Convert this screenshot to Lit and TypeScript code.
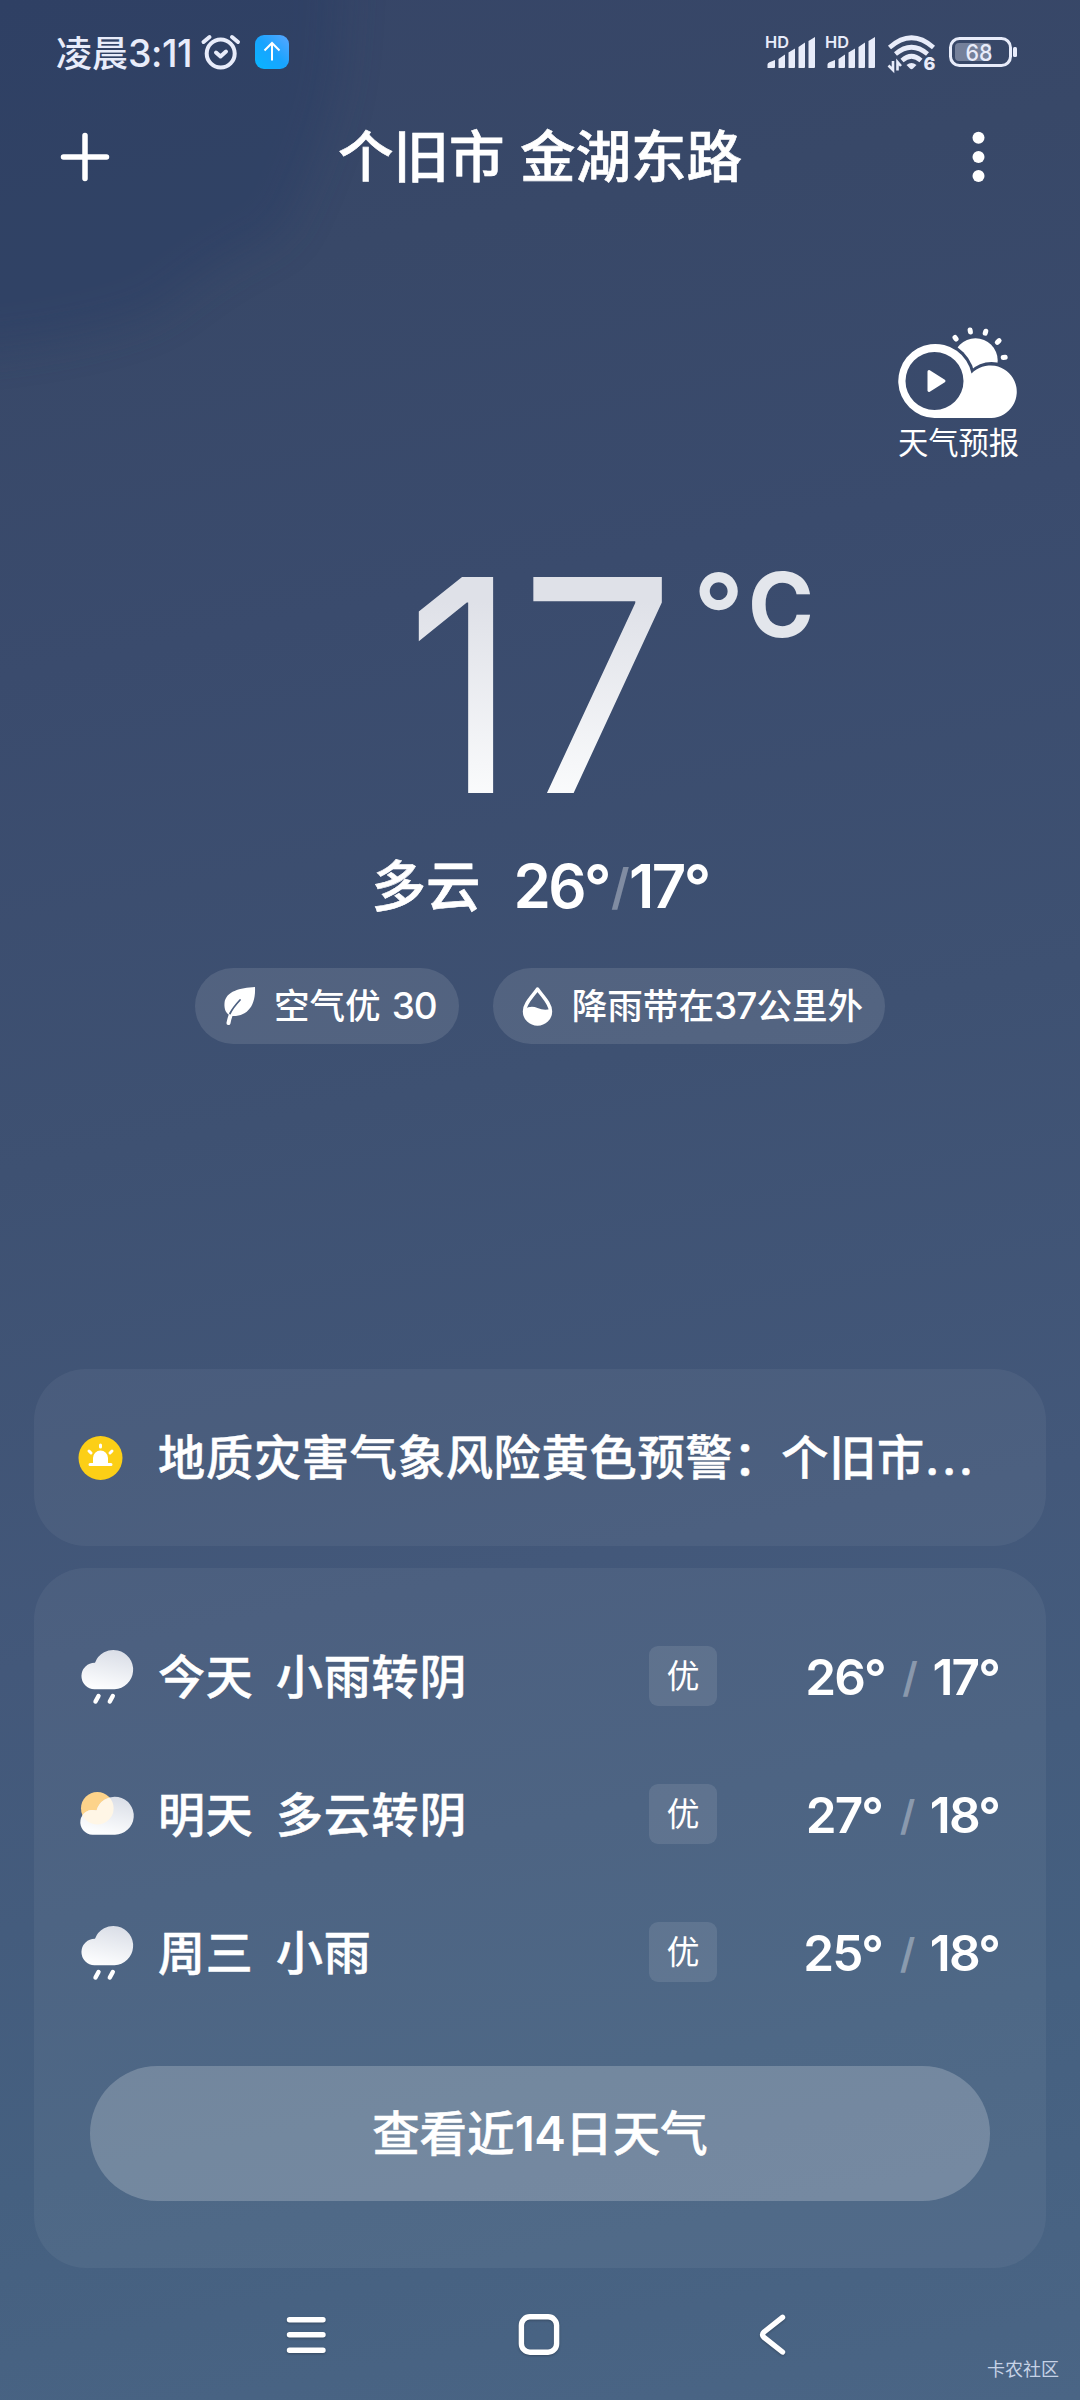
import { LitElement, html, css, svg } from "lit";
import { customElement, property } from "lit/decorators.js";

interface Day {
  name: string;
  text: string;
  icon: "rain" | "cloudy";
  aqi: string;
  high: number;
  low: number;
}

const days: Day[] = [
  { name: "今天", text: "小雨转阴", icon: "rain", aqi: "优", high: 26, low: 17 },
  { name: "明天", text: "多云转阴", icon: "cloudy", aqi: "优", high: 27, low: 18 },
  { name: "周三", text: "小雨", icon: "rain", aqi: "优", high: 25, low: 18 },
];

@customElement("status-bar")
class StatusBar extends LitElement {
  static styles = css`
    :host {
      display: flex;
      height: 104px;
      padding: 0 57px 0 56px;
      align-items: center;
      color: #e8ecfa;
      font: 500 36px/40px "Noto Sans CJK SC", sans-serif;
    }
    .time { width: 143px; white-space: nowrap; line-height: 38px; }
    .clock { font: 500 37.500px/36px Inter, sans-serif; letter-spacing: -0.5px; }
    .grow { flex: 1; }
    svg { display: block; flex: none; overflow: visible; }
    .hd { font: 600 16.5px Inter, sans-serif; fill: #e8ecfa; }
    .num { font: 500 23.5px Inter, sans-serif; fill: #e8ecfa; }
    .six { font: 800 18px Inter, sans-serif; fill: #e8ecfa; }
  `;
  signal() {
    return html`<svg width="60" height="40" viewBox="0 0 60 40" fill="#e8ecfa">
      <text class="hd" x="0" y="16.3" textLength="24" lengthAdjust="spacingAndGlyphs">HD</text>
      <path d="M2.500 36V32.500Q2.500 31 4.500 30.200L10 28V35Q10 36 9 36zM13.500 36V27L20 22.500V35Q20 36 19 36zM23.500 36V20.500L30 16.500V35Q30 36 29 36zM33.500 36V15L40 10.500V35Q40 36 39 36zM43.500 36V9L50 5V35Q50 36 49 36z"/>
    </svg>`;
  }
  render() {
    return html`
      <span class="time">凌晨<span class="clock">3:11</span></span>
      <svg width="44" height="40" viewBox="0 0 44 40" fill="none" stroke="#e8ecfa" stroke-width="4" stroke-linecap="round" stroke-linejoin="round">
        <circle cx="21.700" cy="21.500" r="14"/>
        <path d="M17 20.500L21.500 24.500L27 19.500M4.500 10L10.500 5M33 5L39 10"/>
      </svg>
      <svg width="48" height="40" viewBox="0 0 48 40">
        <defs><linearGradient id="up" x1="0" y1="1" x2="1" y2="0">
          <stop offset="0" stop-color="#08b6ff"/><stop offset=".5" stop-color="#18a4ff"/><stop offset="1" stop-color="#5aa6ff"/>
        </linearGradient></defs>
        <rect x="12" y="3" width="34" height="34" rx="9" fill="url(#up)"/>
        <path d="M29 28.500V11.500M21.500 18.500L29 11L36.500 18.500" fill="none" stroke="#fff" stroke-width="2"/>
      </svg>
      <span class="grow"></span>
      ${this.signal()}${this.signal()}
      <svg width="62" height="40" viewBox="0 0 62 40" fill="none" stroke="#e8ecfa" stroke-width="4.600">
        <path d="M4.500 15.500Q26.500 -4 48.500 15.500M10.500 22Q26.500 8.500 42.500 22M17 28.500Q26.500 20 36 28.500"/>
        <path d="M21.500 33Q26.500 29 31.500 33L28 36.500Q26.500 38 25 36.500z" fill="#e8ecfa" stroke="none"/>
        <path d="M8 29V38L3.500 33.500M12.500 38.500V30L16 34" stroke-width="2.600"/>
        <text class="six" stroke="#384868" stroke-width="3" paint-order="stroke" x="38.500" y="37.500">6</text>
      </svg>
      <svg width="76" height="40" viewBox="0 0 76 40">
        <rect x="3.500" y="6.500" width="60" height="27" rx="9" fill="none" stroke="#e8ecfa" stroke-width="3"/>
        <rect x="8" y="11" width="36" height="18" rx="4" fill="#e8ecfa" opacity=".35"/>
        <rect x="66" y="15" width="4" height="10" rx="1.500" fill="#e8ecfa"/>
        <text class="num" x="18.500" y="29" textLength="27" lengthAdjust="spacingAndGlyphs">68</text>
      </svg>`;
  }
}

@customElement("weather-icon")
class WeatherIcon extends LitElement {
  static styles = css`:host { display: block; } svg { display: block; }`;
  @property() kind: "rain" | "cloudy" = "rain";
  render() {
    return this.kind === "rain"
      ? html`<svg width="60" height="60" viewBox="0.5 0 60 60">
          <defs><linearGradient id="g" gradientUnits="userSpaceOnUse" x1="38" y1="4" x2="30" y2="43">
            <stop offset="0" stop-color="#dadee7"/><stop offset="1" stop-color="#fcfdfe"/>
          </linearGradient></defs>
          <path d="M19 43.300A13.300 13.300 0 1 1 19.500 16.700A19.700 19.700 0 1 1 39 43.300z" fill="url(#g)"/>
          <path d="M23 50L20 55.500M37.300 50L34.300 55.500" stroke="#fff" stroke-width="4.400" stroke-linecap="round"/>
        </svg>`
      : html`<svg width="60" height="60" viewBox="0 0 60 60">
          <defs>
            <linearGradient id="g" gradientUnits="userSpaceOnUse" x1="42" y1="13" x2="34" y2="50">
              <stop offset="0" stop-color="#dadee7"/><stop offset="1" stop-color="#fcfdfe"/>
            </linearGradient>
            <clipPath id="c"><path d="M16.500 50.700A12.400 12.400 0 1 1 20.500 26.500A19 19 0 1 1 39 50.700z"/></clipPath>
          </defs>
          <circle cx="21.300" cy="24.300" r="16.300" fill="#fdd38a"/>
          <path d="M16.500 50.700A12.400 12.400 0 1 1 20.500 26.500A19 19 0 1 1 39 50.700z" fill="url(#g)"/>
          <circle cx="21.300" cy="24.300" r="16.300" fill="#fff6e6" clip-path="url(#c)"/>
        </svg>`;
  }
}

@customElement("forecast-row")
class ForecastRow extends LitElement {
  static styles = css`
    :host {
      display: grid;
      grid-template-columns: 82px 118px 1fr 68px 284px;
      align-items: center;
      height: 138px;
      color: #fff;
      font: 500 47px/60px "Noto Sans CJK SC", sans-serif;
    }
    .word { padding-bottom: 5px; letter-spacing: 0.8px; -webkit-text-stroke: 0.5px #fff; }
    .aqi {
      height: 60px;
      border-radius: 9px;
      background: rgba(255, 255, 255, 0.1);
      font-size: 33px;
      font-weight: 400;
      line-height: 57px;
      text-align: center;
    }
    .temps {
      padding: 2px 2px 0 0;
      text-align: right;
      font: 600 49.500px/60px Inter, sans-serif;
      letter-spacing: -1.900px;
      white-space: nowrap;
    }
    .slash {
      margin: 0 6px 0 7px;
      color: rgba(255, 255, 255, 0.35);
      font-size: 41px;
      vertical-align: 3px;
    }
  `;
  @property({ attribute: false }) day!: Day;
  render() {
    const d = this.day;
    return html`<weather-icon .kind=${d.icon}></weather-icon>
      <span class="word">${d.name}</span><span class="word">${d.text}</span>
      <span class="aqi">${d.aqi}</span>
      <span class="temps">${d.high}° <span class="slash">/</span> ${d.low}°</span>`;
  }
}

@customElement("app-root")
class AppRoot extends LitElement {
  static styles = css`
    :host { display: block; }
    * { box-sizing: border-box; }
    svg { display: block; }
    .page {
      position: relative;
      display: flex;
      flex-direction: column;
      width: 1080px;
      height: 2400px;
      overflow: hidden;
      color: #fff;
      font-family: "Noto Sans CJK SC", sans-serif;
      background: linear-gradient(169deg, #364567 0%, #384868 12%, #3a4b6d 26%, #3e5172 45%, #43587a 64%, #456080 84%, #4a6585 100%);
    }
    .sky { position: absolute; left: 0; top: 0; }
    .page > :not(.sky):not(.mark) { position: relative; flex: none; }
    .top {
      display: flex;
      align-items: center;
      justify-content: space-between;
      height: 106px;
      padding: 0 60px 0 60px;
    }
    .plus { margin-right: 33px; }
    .city {
      padding-bottom: 8px;
      font-size: 55.500px;
      font-weight: 500;
      line-height: 80px;
      word-spacing: 3px;
      -webkit-text-stroke: 0.6px #fff;
    }
    .video {
      display: flex;
      flex-direction: column;
      align-items: center;
      align-self: flex-end;
      width: 121px;
      height: 221px;
      margin: 116px 61px 0 0;
      font-size: 30.300px;
      line-height: 46px;
      white-space: nowrap;
    }
    .now { display: flex; height: 299px; padding-left: 406px; }
    .now svg { overflow: visible; }
    .deg {
      width: 274px;
      height: 280px;
      font: 400 297px/276px Inter, sans-serif;
    }
    .digits {
      display: block;
      width: 320px;
      height: 276px;
      letter-spacing: 3.4px;
      transform: scaleX(0.92);
      transform-origin: left;
      background: linear-gradient(#dfe1e8 20%, #fafbfc 90%);
      -webkit-background-clip: text;
      background-clip: text;
      color: transparent;
    }
    .unit { fill: #e3e6ec; font-family: Inter, sans-serif; }
    .ring { font-size: 112px; font-weight: 600; }
    .cee { font-size: 89px; font-weight: 700; }
    .summary {
      display: flex;
      justify-content: center;
      gap: 33px;
      height: 80px;
      font-size: 54.500px;
      font-weight: 500;
      line-height: 73px;
    }
    .cond { -webkit-text-stroke: 0.6px #fff; }
    .range { font: 600 60px/80px Inter, sans-serif; letter-spacing: -2.600px; }
    .slash { margin: 0 2px; color: rgba(255, 255, 255, 0.35); font-size: 49px; vertical-align: 4px; }
    .pills { display: flex; justify-content: center; gap: 34px; margin-top: 42px; }
    .pill {
      display: flex;
      align-items: center;
      height: 76px;
      border-radius: 38px;
      padding: 0 22px 0 28px;
      gap: 18px;
      background: rgba(255, 255, 255, 0.11);
      font: 500 35.600px/72px "Noto Sans CJK SC", sans-serif;
      white-space: nowrap;
    }
    .pill span { height: 76px; }
    .first { word-spacing: 3px; }
    .fig { font: 500 37px/70px Inter, sans-serif; letter-spacing: -1px; }
    .card {
      margin: 0 34px;
      border-radius: 52px;
      background: rgba(255, 255, 255, 0.05);
    }
    .alert {
      display: flex;
      align-items: center;
      height: 177px;
      margin-top: 325px;
      padding-left: 43px;
      gap: 35px;
      font-size: 47.200px;
      font-weight: 500;
      letter-spacing: 0.75px;
      white-space: nowrap;
    }
    .message { padding-bottom: 7px; -webkit-text-stroke: 0.5px #fff; }
    .dots { font-family: Inter, sans-serif; letter-spacing: 2.600px; }
    .days { height: 700px; margin-top: 22px; padding: 39px 45px 0 42px; }
    .more {
      height: 135px;
      margin: 45px 11px 0 14px;
      border-radius: 68px;
      background: rgba(255, 255, 255, 0.21);
      font-size: 47.500px;
      font-weight: 500;
      line-height: 129px;
      text-align: center;
      -webkit-text-stroke: 0.5px #fff;
    }
    .num { font-family: Inter, sans-serif; font-weight: 600; letter-spacing: -0.5px; -webkit-text-stroke: 0; }
    .nav { display: flex; height: 132px; padding: 44px 0 0 282px; filter: drop-shadow(0 1px 1px rgba(0, 0, 0, 0.25)); }
    .mark {
      position: absolute;
      right: 21px;
      bottom: 18px;
      color: #c6d2e6;
      font-size: 18px;
      line-height: 28px;
    }
  `;

  sky() {
    return svg`<defs>
        <filter id="soft" x="-30%" y="-30%" width="160%" height="160%"><feGaussianBlur stdDeviation="20"/></filter>
      </defs>
      <path d="M-90 -90H345Q345 60 330 110Q310 180 280 235Q220 260 160 310Q80 345 -90 355z" fill="#283a62" opacity=".4" filter="url(#soft)"/>`;
  }

  render() {
    return html`<div class="page">
      <svg class="sky" width="1080" height="600">${this.sky()}</svg>
      <status-bar></status-bar>
      <div class="top">
        <svg class="plus" width="50" height="50" viewBox="0 0 50 50" stroke="#fff" stroke-width="5.500" stroke-linecap="round"><path d="M25 3.500V46.500M3.500 25H46.500"/></svg>
        <span class="city">个旧市 金湖东路</span>
        <svg width="83" height="52" viewBox="0 0 83 52" fill="#fff"><circle cx="41.500" cy="6.800" r="6"/><circle cx="41.500" cy="26" r="6"/><circle cx="41.500" cy="45" r="6"/></svg>
      </div>
      <div class="video">
        <svg width="121" height="92" viewBox="0.500 0 121 92" fill="#fff">
          <defs><mask id="gap"><rect width="120" height="92" fill="#fff"/><circle cx="37" cy="55" r="40.800" fill="#000"/><circle cx="94" cy="66" r="30" fill="#000"/></mask></defs>
          <circle cx="78" cy="34.500" r="22.200" mask="url(#gap)"/>
          <path fill-rule="evenodd" d="M37 92A37 37 0 1 1 74 47.500A26.300 26.300 0 1 1 94 92zM37 84A29 29 0 1 0 37 26A29 29 0 1 0 37 84z"/>
          <path d="M31.500 45.500L46.500 55L31.500 64.500z" stroke="#fff" stroke-width="3" stroke-linejoin="round"/>
          <g stroke="#fff" stroke-width="5" stroke-linecap="round"><path d="M57.500 11.500L58.600 13M72.600 4L72.900 6M88.300 5.200L87.700 7.200M101.600 14.700L99.800 16.300M107.700 31.300L105.700 31.500"/></g>
        </svg>
        <span>天气预报</span>
      </div>
      <div class="now">
        <div class="deg"><span class="digits">17</span></div>
        <svg class="unit" width="150" height="120" viewBox="0 0 150 120">
          <text class="ring" x="13" y="107">°</text><text class="cee" x="68" y="90">C</text>
        </svg>
      </div>
      <div class="summary">
        <span class="cond">多云</span>
        <span class="range">26°<span class="slash">/</span>17°</span>
      </div>
      <div class="pills">
        <div class="pill">
          <svg width="33" height="40" viewBox="0 0 33 40"><path d="M32 1C17 2 3 5 1.500 17C1 23 3 28 7 29Q10 22 16 14.500Q10 23 8.500 30C24 31 33 20 32 1z" fill="#fff"/><path d="M16 14.500Q8 24 5.500 37" fill="none" stroke="#fff" stroke-width="4" stroke-linecap="round"/><path d="M17 14Q10 21.500 7 27.500" stroke="#4d6080" stroke-width="1.800" fill="none" stroke-linecap="round"/></svg>
          <span class="first">空气优 <span class="fig">30</span></span>
        </div>
        <div class="pill">
          <svg width="33" height="40" viewBox="0 0 33 40"><path d="M16.500 3C12 10 3.500 17 3.500 25.500A13 12.500 0 0 0 29.500 25.500C29.500 17 21 10 16.500 3z" fill="none" stroke="#fff" stroke-width="3.400" stroke-linejoin="round"/><path d="M3.500 23Q10 19 16.500 22T29.500 23V26A13 12.500 0 0 1 3.500 26z" fill="#fff"/></svg>
          <span>降雨带在<span class="fig">37</span>公里外</span>
        </div>
      </div>
      <div class="card alert">
        <svg width="46" height="46" viewBox="-0.500 0 46 46"><circle cx="23" cy="23" r="22" fill="#fccf16"/>
          <path d="M15.500 28V23A7.500 7.500 0 0 1 30.500 23V28H33.500Q35 28 35 29.500T33.500 31H12.500Q11 31 11 29.500T12.500 28z" fill="#fff"/>
          <path d="M23 10V12M11.500 16L13.500 18M34.500 16L32.500 18" stroke="#fff" stroke-width="3" stroke-linecap="round"/></svg>
        <span class="message">地质灾害气象风险黄色预警：个旧市<span class="dots">...</span></span>
      </div>
      <div class="card days">
        ${days.map((d) => html`<forecast-row .day=${d}></forecast-row>`)}
        <div class="more">查看近<span class="num">14</span>日天气</div>
      </div>
      <div class="nav">
        <svg width="506" height="46" viewBox="-2 0 506 46" fill="none" stroke="#fff" stroke-width="5.400" stroke-linecap="round" stroke-linejoin="round">
          <path d="M5.500 7.700H39M5.500 22.700H39M5.500 38.300H39"/>
          <rect x="237.400" y="4.800" width="35.200" height="35.400" rx="8.500"/>
          <path d="M498.500 5.300L480 20Q477 22.700 480 25.400L498.500 40"/>
        </svg>
      </div>
      <span class="mark">卡农社区</span>
    </div>`;
  }
}
